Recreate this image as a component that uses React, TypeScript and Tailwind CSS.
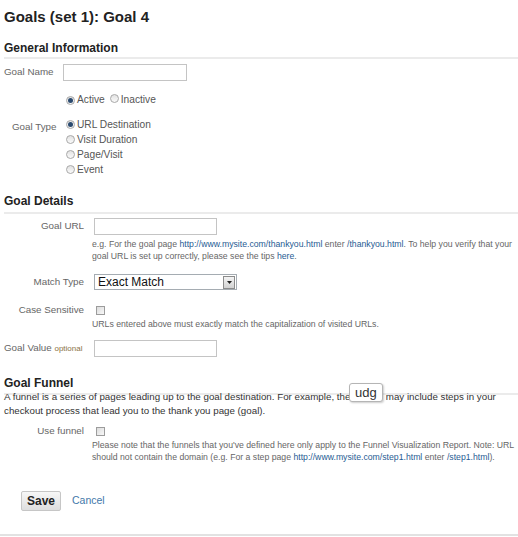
import React from 'react'

function Radio({ checked }: { checked?: boolean }) {
  return (
    <span className="relative inline-flex h-[9px] w-[9px] shrink-0 items-center justify-center rounded-full border border-[#a8a8a8] bg-gradient-to-b from-[#e2e2e2] to-[#fafafa]">
      {checked && <span className="h-[5px] w-[5px] rounded-full bg-[#2b4a6f]" />}
    </span>
  )
}

function Checkbox() {
  return (
    <span className="inline-block h-[9px] w-[9px] shrink-0 border border-[#9c9c9c] bg-gradient-to-br from-[#dcdcdc] to-[#f8f8f8]" />
  )
}

function TextInput({ width }: { width: string }) {
  return <div className={`h-[17px] ${width} border border-[#c4c4c4] bg-white`} />
}

function SectionHeading({ children, className }: { children: React.ReactNode; className: string }) {
  return (
    <div className={`border-b-2 border-[#ebebeb] text-[12px] leading-[16px] font-bold text-[#222] ${className}`}>
      {children}
    </div>
  )
}

function Link({ children }: { children: React.ReactNode }) {
  return <span className="text-[#1f5c93]">{children}</span>
}

export default function App() {
  return (
    <div className="relative h-[537px] w-[518px] overflow-hidden bg-white font-['Liberation_Sans',Arial,sans-serif] text-[#333]">
      <div className="pl-[4px]">
        <h1 className="pt-[7px] text-[15px] leading-[20px] font-bold text-[#222]">Goals (set 1): Goal 4</h1>

        <SectionHeading className="mt-[13px] pb-[1px]">General Information</SectionHeading>

        <div className="mt-[5px] flex h-[17px] items-center">
          <span className="w-[59px] text-[9.8px] text-[#666]">Goal Name</span>
          <TextInput width="w-[124px]" />
        </div>

        <div className="mt-[13px] ml-[62px] flex h-[12px] items-center text-[10.2px] text-[#555]">
          <Radio checked />
          <span className="ml-[2px]">Active</span>
          <span className="ml-[5px]"><Radio /></span>
          <span className="ml-[2px]">Inactive</span>
        </div>

        <div className="mt-[11px] flex">
          <span className="mt-[4px] h-[12px] w-[59px] pl-[8px] text-[9.8px] leading-[12px] text-[#666]">Goal Type</span>
          <div className="ml-[3px] flex flex-col text-[10.2px] text-[#555]">
            {['URL Destination', 'Visit Duration', 'Page/Visit', 'Event'].map((label, i) => (
              <div key={label} className="flex h-[15px] items-center gap-[2px]">
                <Radio checked={i === 0} />
                <span>{label}</span>
              </div>
            ))}
          </div>
        </div>

        <SectionHeading className="mt-[16px] pb-[3px]">Goal Details</SectionHeading>

        <div className="mt-[4px] flex h-[17px] items-center">
          <span className="w-[80px] text-right text-[9.8px] text-[#666]">Goal URL</span>
          <div className="ml-[10px]"><TextInput width="w-[123px]" /></div>
        </div>
        <p className="mt-[3px] ml-[88px] text-[8.7px] leading-[12px] text-[#666]">
          e.g. For the goal page <Link>http://www.mysite.com/thankyou.html</Link> enter <Link>/thankyou.html</Link>. To help you verify that your
          <br />
          goal URL is set up correctly, please see the tips <Link>here</Link>.
        </p>

        <div className="mt-[12px] flex h-[16px] items-center">
          <span className="w-[80px] text-right text-[9.8px] text-[#666]">Match Type</span>
          <div className="ml-[10px] flex h-[16px] w-[143px] items-center justify-between border border-[#a5acb2] bg-white pl-[3px] pr-[1px]">
            <span className="text-[12px] leading-[14px] text-[#111]">Exact Match</span>
            <span className="flex h-[13px] w-[12px] items-center justify-center border border-[#8c8c8c] bg-gradient-to-b from-[#f4f4f4] to-[#d2d2d2]">
              <svg width="5" height="3" viewBox="0 0 5 3"><path d="M0 0h5L2.5 3z" fill="#222" /></svg>
            </span>
          </div>
        </div>

        <div className="mt-[14px] flex h-[12px] items-center">
          <span className="w-[80px] text-right text-[9.8px] text-[#666]">Case Sensitive</span>
          <span className="ml-[12px]"><Checkbox /></span>
        </div>
        <p className="mt-[2px] ml-[88px] text-[8.7px] leading-[12px] text-[#666]">
          URLs entered above must exactly match the capitalization of visited URLs.
        </p>

        <div className="mt-[10px] flex h-[17px] items-center">
          <span className="w-[80px] text-[9.8px] whitespace-nowrap text-[#666]">
            Goal Value <span className="text-[8px] text-[#8a7346]">optional</span>
          </span>
          <div className="ml-[10px]"><TextInput width="w-[123px]" /></div>
        </div>

        <SectionHeading className="mt-[18px] pb-[2px]">Goal Funnel</SectionHeading>

        <p className="relative mt-[-5px] text-[9.75px] leading-[13.5px] text-[#333]">
          A funnel is a series of pages leading up to the goal destination. For example, the{' '}
          <span className="relative inline-block w-[30px]">
            <span className="absolute top-[-17px] left-[-4px] rounded-[3px] border border-[#b5b5b5] bg-white px-[5px] text-[13px] leading-[17px] text-[#333] shadow-[1px_1px_2px_rgba(0,0,0,0.2)]">
              udg
            </span>
          </span>{' '}
          may include steps in your
          <br />
          checkout process that lead you to the thank you page (goal).
        </p>

        <div className="mt-[8px] flex h-[12px] items-center">
          <span className="w-[80px] text-right text-[9.8px] text-[#666]">Use funnel</span>
          <span className="ml-[12px]"><Checkbox /></span>
        </div>
        <p className="mt-[2px] ml-[88px] text-[8.7px] leading-[12px] text-[#666]">
          Please note that the funnels that you've defined here only apply to the Funnel Visualization Report. Note: URL
          <br />
          should not contain the domain (e.g. For a step page <Link>http://www.mysite.com/step1.html</Link> enter <Link>/step1.html</Link>).
        </p>

        <div className="mt-[28px] flex items-center">
          <button className="ml-[17px] h-[20px] w-[40px] rounded-[2px] border border-[#c6c6c6] bg-gradient-to-b from-[#f7f7f7] to-[#dedede] text-[12px] leading-[18px] font-bold text-[#222]">
            Save
          </button>
          <span className="ml-[11px] text-[10.5px] text-[#3f78aa]">Cancel</span>
        </div>
      </div>
      <div className="absolute right-0 bottom-[1px] left-0 h-[2px] bg-[#e2e2e2]" />
    </div>
  )
}
